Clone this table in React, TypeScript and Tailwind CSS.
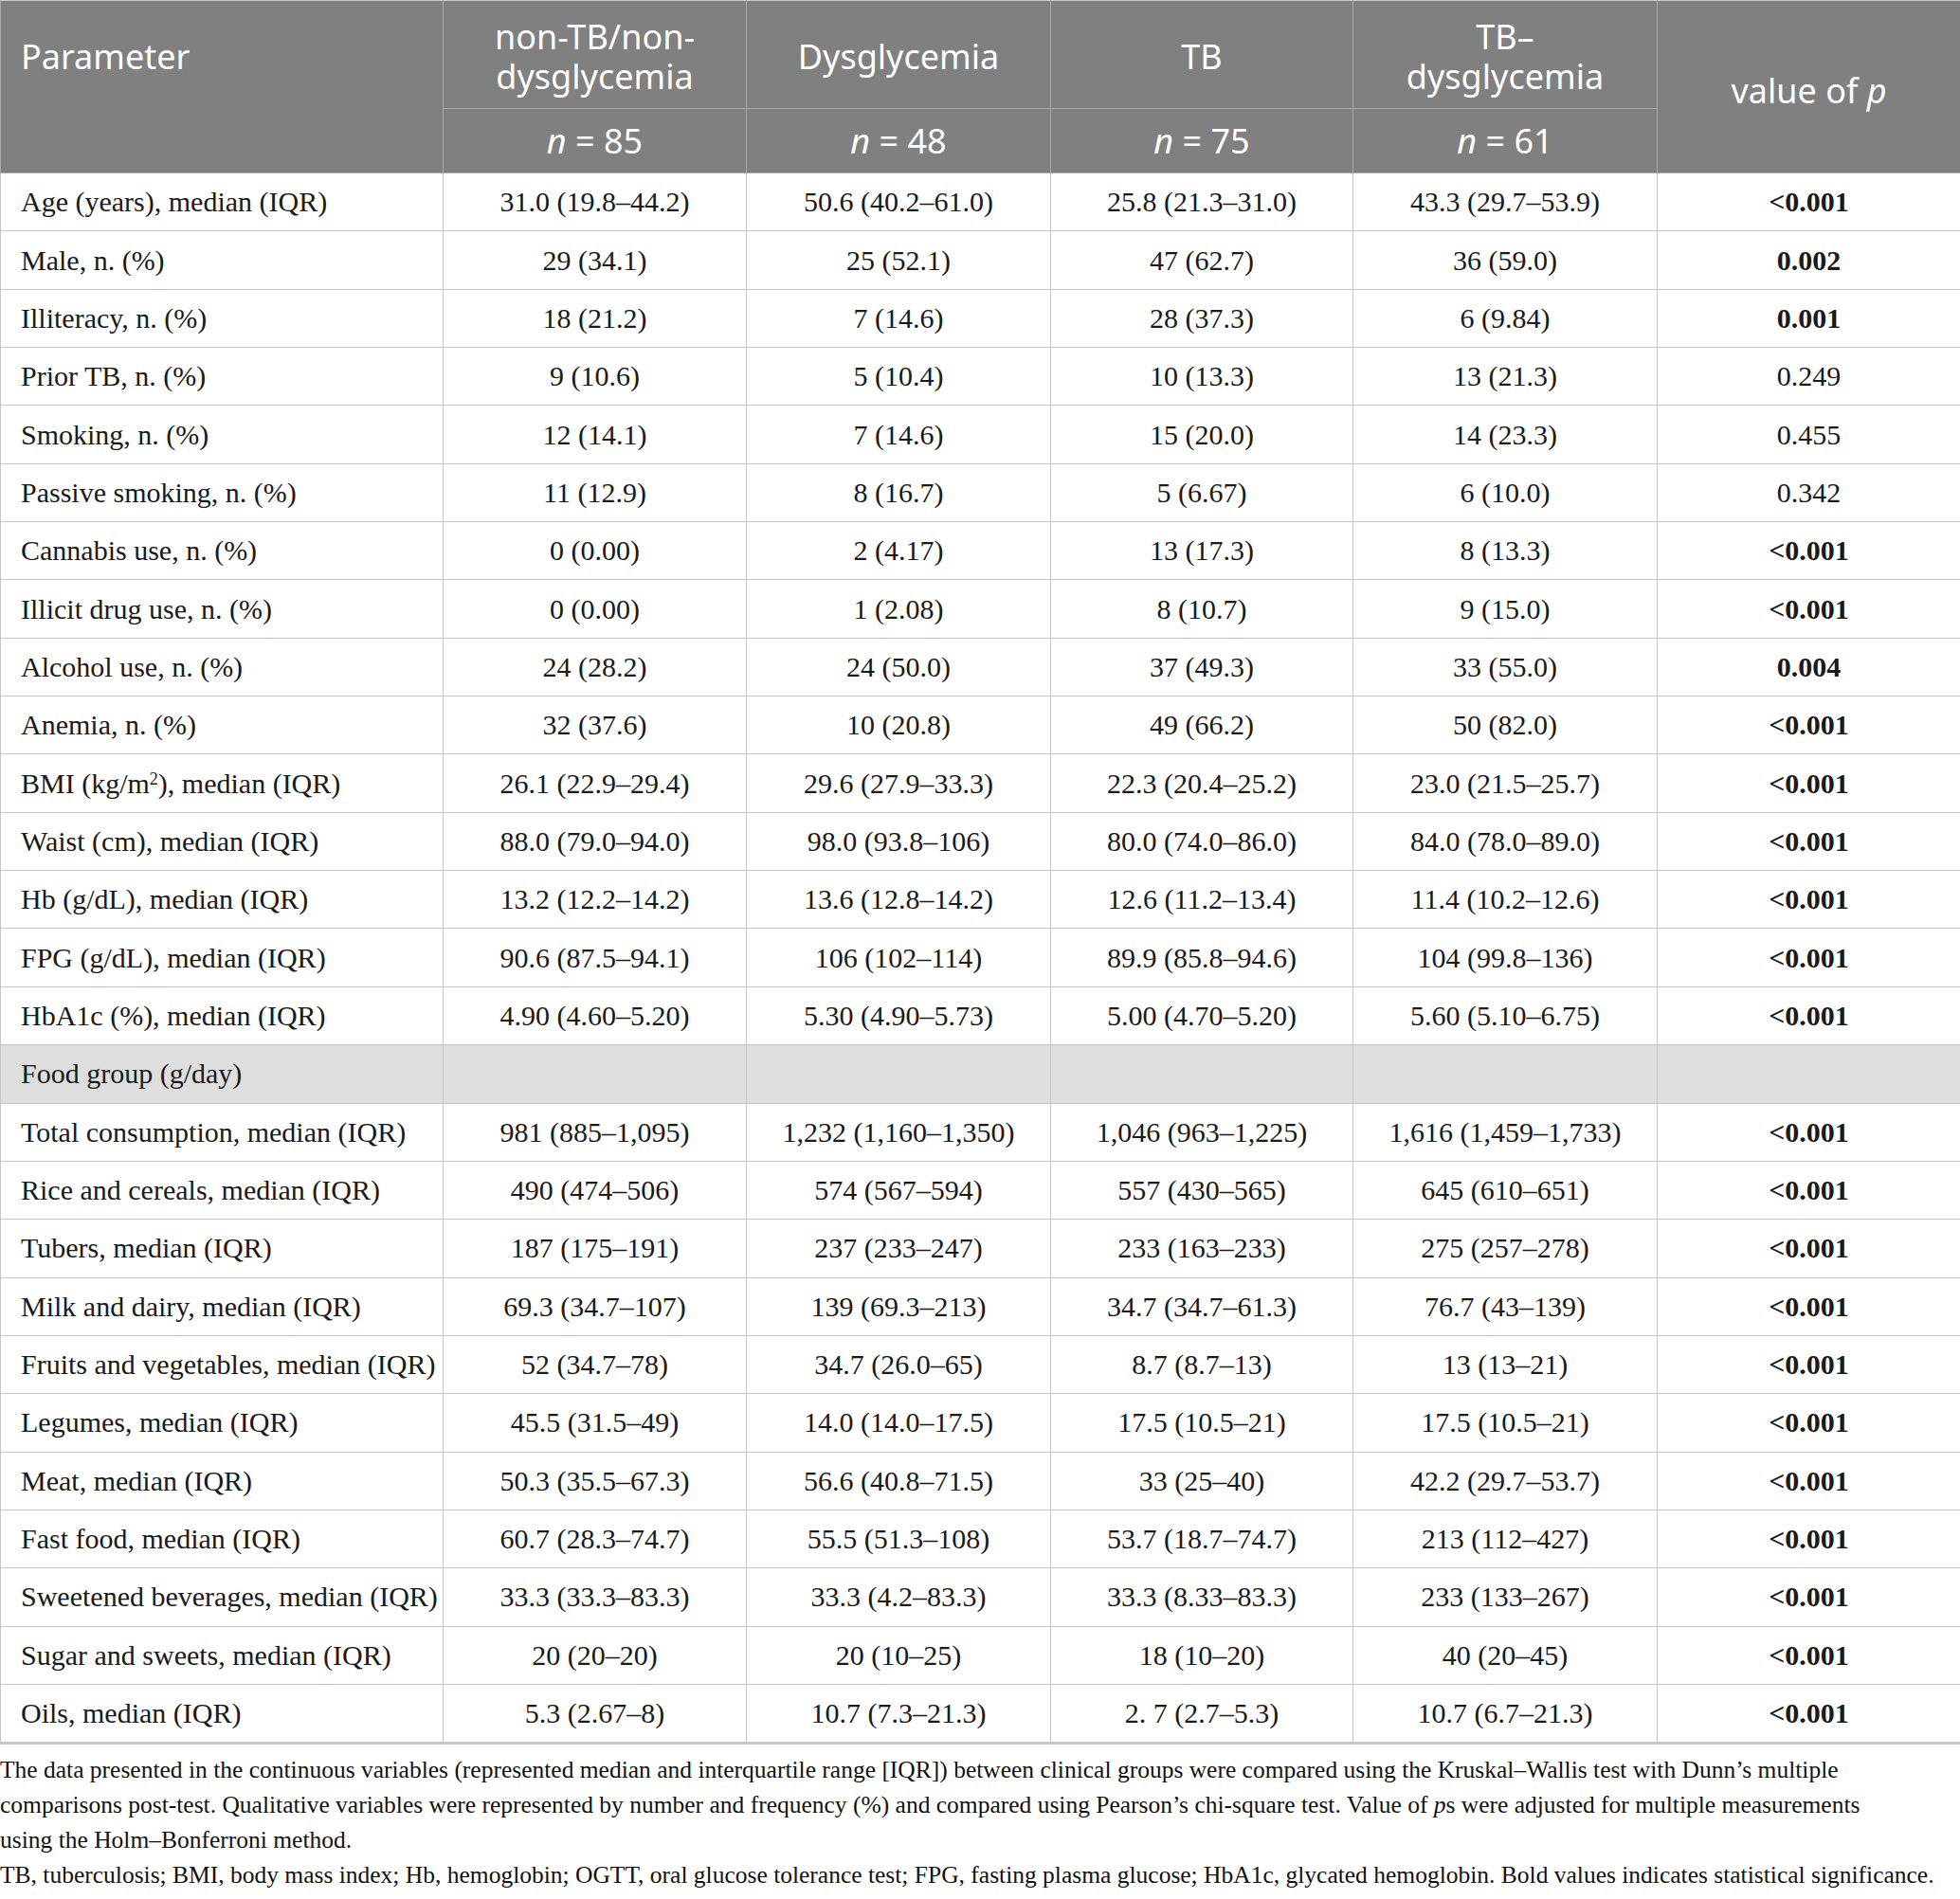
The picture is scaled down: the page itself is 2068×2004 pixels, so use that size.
import React from 'react';

type Row = {
  label: React.ReactNode;
  values: string[];
  p: string;
  bold: boolean;
};

const clinical: Row[] = [
  { label: 'Age (years), median (IQR)', values: ['31.0 (19.8–44.2)', '50.6 (40.2–61.0)', '25.8 (21.3–31.0)', '43.3 (29.7–53.9)'], p: '<0.001', bold: true },
  { label: 'Male, n. (%)', values: ['29 (34.1)', '25 (52.1)', '47 (62.7)', '36 (59.0)'], p: '0.002', bold: true },
  { label: 'Illiteracy, n. (%)', values: ['18 (21.2)', '7 (14.6)', '28 (37.3)', '6 (9.84)'], p: '0.001', bold: true },
  { label: 'Prior TB, n. (%)', values: ['9 (10.6)', '5 (10.4)', '10 (13.3)', '13 (21.3)'], p: '0.249', bold: false },
  { label: 'Smoking, n. (%)', values: ['12 (14.1)', '7 (14.6)', '15 (20.0)', '14 (23.3)'], p: '0.455', bold: false },
  { label: 'Passive smoking, n. (%)', values: ['11 (12.9)', '8 (16.7)', '5 (6.67)', '6 (10.0)'], p: '0.342', bold: false },
  { label: 'Cannabis use, n. (%)', values: ['0 (0.00)', '2 (4.17)', '13 (17.3)', '8 (13.3)'], p: '<0.001', bold: true },
  { label: 'Illicit drug use, n. (%)', values: ['0 (0.00)', '1 (2.08)', '8 (10.7)', '9 (15.0)'], p: '<0.001', bold: true },
  { label: 'Alcohol use, n. (%)', values: ['24 (28.2)', '24 (50.0)', '37 (49.3)', '33 (55.0)'], p: '0.004', bold: true },
  { label: 'Anemia, n. (%)', values: ['32 (37.6)', '10 (20.8)', '49 (66.2)', '50 (82.0)'], p: '<0.001', bold: true },
  {
    label: (
      <>
        BMI (kg/m<sup className="text-[0.6em]">2</sup>), median (IQR)
      </>
    ),
    values: ['26.1 (22.9–29.4)', '29.6 (27.9–33.3)', '22.3 (20.4–25.2)', '23.0 (21.5–25.7)'],
    p: '<0.001',
    bold: true,
  },
  { label: 'Waist (cm), median (IQR)', values: ['88.0 (79.0–94.0)', '98.0 (93.8–106)', '80.0 (74.0–86.0)', '84.0 (78.0–89.0)'], p: '<0.001', bold: true },
  { label: 'Hb (g/dL), median (IQR)', values: ['13.2 (12.2–14.2)', '13.6 (12.8–14.2)', '12.6 (11.2–13.4)', '11.4 (10.2–12.6)'], p: '<0.001', bold: true },
  { label: 'FPG (g/dL), median (IQR)', values: ['90.6 (87.5–94.1)', '106 (102–114)', '89.9 (85.8–94.6)', '104 (99.8–136)'], p: '<0.001', bold: true },
  { label: 'HbA1c (%), median (IQR)', values: ['4.90 (4.60–5.20)', '5.30 (4.90–5.73)', '5.00 (4.70–5.20)', '5.60 (5.10–6.75)'], p: '<0.001', bold: true },
];

const food: Row[] = [
  { label: 'Total consumption, median (IQR)', values: ['981 (885–1,095)', '1,232 (1,160–1,350)', '1,046 (963–1,225)', '1,616 (1,459–1,733)'], p: '<0.001', bold: true },
  { label: 'Rice and cereals, median (IQR)', values: ['490 (474–506)', '574 (567–594)', '557 (430–565)', '645 (610–651)'], p: '<0.001', bold: true },
  { label: 'Tubers, median (IQR)', values: ['187 (175–191)', '237 (233–247)', '233 (163–233)', '275 (257–278)'], p: '<0.001', bold: true },
  { label: 'Milk and dairy, median (IQR)', values: ['69.3 (34.7–107)', '139 (69.3–213)', '34.7 (34.7–61.3)', '76.7 (43–139)'], p: '<0.001', bold: true },
  { label: 'Fruits and vegetables, median (IQR)', values: ['52 (34.7–78)', '34.7 (26.0–65)', '8.7 (8.7–13)', '13 (13–21)'], p: '<0.001', bold: true },
  { label: 'Legumes, median (IQR)', values: ['45.5 (31.5–49)', '14.0 (14.0–17.5)', '17.5 (10.5–21)', '17.5 (10.5–21)'], p: '<0.001', bold: true },
  { label: 'Meat, median (IQR)', values: ['50.3 (35.5–67.3)', '56.6 (40.8–71.5)', '33 (25–40)', '42.2 (29.7–53.7)'], p: '<0.001', bold: true },
  { label: 'Fast food, median (IQR)', values: ['60.7 (28.3–74.7)', '55.5 (51.3–108)', '53.7 (18.7–74.7)', '213 (112–427)'], p: '<0.001', bold: true },
  { label: 'Sweetened beverages, median (IQR)', values: ['33.3 (33.3–83.3)', '33.3 (4.2–83.3)', '33.3 (8.33–83.3)', '233 (133–267)'], p: '<0.001', bold: true },
  { label: 'Sugar and sweets, median (IQR)', values: ['20 (20–20)', '20 (10–25)', '18 (10–20)', '40 (20–45)'], p: '<0.001', bold: true },
  { label: 'Oils, median (IQR)', values: ['5.3 (2.67–8)', '10.7 (7.3–21.3)', '2. 7 (2.7–5.3)', '10.7 (6.7–21.3)'], p: '<0.001', bold: true },
];

const groups = [
  { name: <>non-TB/non-<br />dysglycemia</>, n: '85' },
  { name: 'Dysglycemia', n: '48' },
  { name: 'TB', n: '75' },
  { name: <>TB–<br />dysglycemia</>, n: '61' },
];

const cell = 'border border-[#c6c6c6] h-[61.35px] p-0 align-middle';

function DataRow({ row }: { row: Row }) {
  return (
    <tr>
      <td className={`${cell} pl-[21px] text-left whitespace-nowrap`}>{row.label}</td>
      {row.values.map((v, i) => (
        <td key={i} className={`${cell} text-center`}>
          {v}
        </td>
      ))}
      <td className={`${cell} text-center ${row.bold ? 'font-bold' : ''}`}>{row.p}</td>
    </tr>
  );
}

export default function App() {
  return (
    <div className="w-[2068px] bg-white text-[#1a1a1a]">
      <table className="w-[2068px] table-fixed border-collapse font-['Liberation_Serif',serif] text-[30px] leading-none">
        <colgroup>
          <col className="w-[467px]" />
          <col className="w-[320px]" />
          <col className="w-[321px]" />
          <col className="w-[319px]" />
          <col className="w-[321px]" />
          <col className="w-[320px]" />
        </colgroup>
        <thead className="bg-[#7f807f] font-['Noto_Sans',sans-serif] text-[36px] font-normal leading-[42px] text-white">
          <tr className="h-[114px]">
            <th rowSpan={2} className="border border-[#a9a9a9] border-t-[#c8c8c8] pl-[21px] pt-[38px] text-left align-top font-normal">
              Parameter
            </th>
            {groups.map((g, i) => (
              <th key={i} className="border border-[#a9a9a9] border-t-[#c8c8c8] pt-[4px] text-center align-middle font-normal">
                {g.name}
              </th>
            ))}
            <th rowSpan={2} className="border border-[#a9a9a9] border-t-[#c8c8c8] pt-[8px] text-center align-middle font-normal">
              value of <i>p</i>
            </th>
          </tr>
          <tr className="h-[68px]">
            {groups.map((g, i) => (
              <th key={i} className="border border-[#a9a9a9] text-center align-middle font-normal">
                <i>n</i> = {g.n}
              </th>
            ))}
          </tr>
        </thead>
        <tbody>
          {clinical.map((r, i) => (
            <DataRow key={i} row={r} />
          ))}
          <tr className="bg-[#dfdedf]">
            <td className={`${cell} pl-[21px] text-left`}>Food group (g/day)</td>
            <td className={cell}></td>
            <td className={cell}></td>
            <td className={cell}></td>
            <td className={cell}></td>
            <td className={cell}></td>
          </tr>
          {food.map((r, i) => (
            <DataRow key={i} row={r} />
          ))}
        </tbody>
      </table>
      <div className="border-t-2 border-[#c6c6c6] pt-[8px] font-['Liberation_Serif',serif] text-[25.5px] leading-[37px] text-[#111]">
        <p>
          The data presented in the continuous variables (represented median and interquartile range [IQR]) between clinical groups were compared using the Kruskal–Wallis test with Dunn’s multiple
          <br />
          comparisons post-test. Qualitative variables were represented by number and frequency (%) and compared using Pearson’s chi-square test. Value of <i>p</i>s were adjusted for multiple measurements
          <br />
          using the Holm–Bonferroni method.
        </p>
        <p className="whitespace-nowrap">
          TB, tuberculosis; BMI, body mass index; Hb, hemoglobin; OGTT, oral glucose tolerance test; FPG, fasting plasma glucose; HbA1c, glycated hemoglobin. Bold values indicates statistical significance.
        </p>
      </div>
    </div>
  );
}
